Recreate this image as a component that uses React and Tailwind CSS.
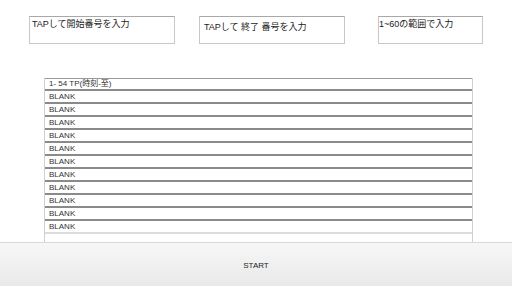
export default function App() {
  const rows = Array.from({ length: 11 });
  return (
    <div className="w-[512px] h-[286px] bg-white flex flex-col overflow-hidden" style={{ fontFamily: '"Liberation Sans", "Noto Sans CJK JP", sans-serif' }}>
      <div className="flex items-start pt-[16px] pl-[29px] h-[78px]">
        <div className="w-[146px] h-[28px] border border-[#c8c8c8] border-t-[#a8a8a8] text-[9px] text-[#222] pl-[2px] pt-[1px] leading-[12px]">TAPして開始番号を入力</div>
        <div className="w-[146px] h-[28px] ml-[24px] border border-[#c8c8c8] border-t-[#a8a8a8] text-[9px] text-[#222] pl-[4px] pt-[4px] leading-[12px]">TAPして 終了 番号を入力</div>
        <div className="w-[105px] h-[28px] ml-[33px] border border-[#c8c8c8] border-t-[#a8a8a8] text-[9px] text-[#222] pt-[1px] leading-[12px]">1~60の範囲で入力</div>
      </div>
      <div className="ml-[44px] w-[429px] h-[164px] border-x border-[#cfcfcf] flex flex-col">
        <div className="h-[11px] border-t border-[#999] text-[8px] text-[#333] pl-[4px] leading-[10px]">1- 54 TP(時刻-至)</div>
        {rows.map((_, i) => (
          <div key={i} className="h-[13px] border-t-2 border-[#8a8a8a] text-[8px] text-[#333] pl-[4px] leading-[11px] bg-white">BLANK</div>
        ))}
        <div className="h-[10px] border-t-2 border-[#dcdcdc]"></div>
      </div>
      <div className="flex-1 border-t border-[#d8d8d8] bg-gradient-to-b from-[#f7f7f7] to-[#e9e9e9] flex items-center justify-center pt-[3px] text-[8px] text-[#222]">START</div>
    </div>
  );
}
